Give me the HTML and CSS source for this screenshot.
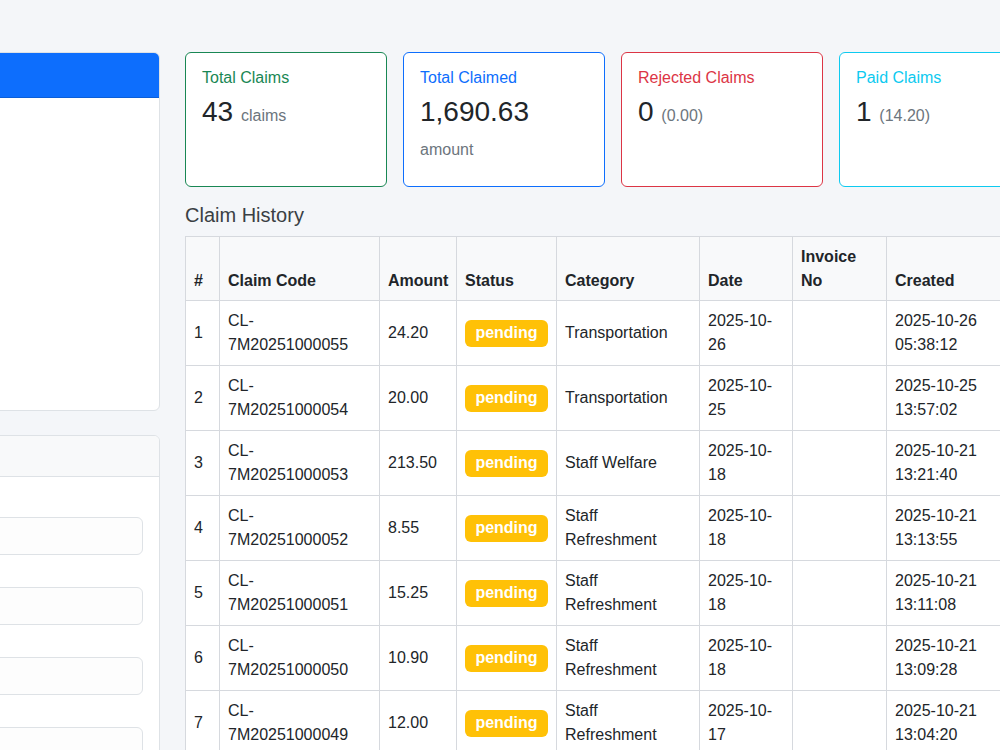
FILE: index.html
```html
<!DOCTYPE html>
<html lang="en">
<head>
    <meta charset="UTF-8">
    <title>My Claims</title>
    <meta name="viewport" content="width=device-width, initial-scale=1.0">
    <link rel="stylesheet" href="styles.css">
</head>
<body>
<div class="page">
    <aside class="side">
        <div class="card">
            <div class="card-header header-blue"></div>
            <div class="card-body profile-body"></div>
        </div>
        <div class="card">
            <div class="card-header"></div>
            <div class="card-body">
                <input type="text" class="field">
                <input type="text" class="field">
                <input type="text" class="field">
                <input type="text" class="field">
                <input type="text" class="field">
            </div>
        </div>
    </aside>
    <main class="content">
        <div class="stats">
            <div class="stat green">
                <h6 class="stat-title">Total Claims</h6>
                <h3 class="stat-value">43 <small>claims</small></h3>
            </div>
            <div class="stat blue">
                <h6 class="stat-title">Total Claimed</h6>
                <h3 class="stat-value">1,690.63 <small>amount</small></h3>
            </div>
            <div class="stat red">
                <h6 class="stat-title">Rejected Claims</h6>
                <h3 class="stat-value">0 <small>(0.00)</small></h3>
            </div>
            <div class="stat cyan">
                <h6 class="stat-title">Paid Claims</h6>
                <h3 class="stat-value">1 <small>(14.20)</small></h3>
            </div>
        </div>
        <h5 class="section-title">Claim History</h5>
        <table class="claims">
            <colgroup>
                <col style="width:34px">
                <col style="width:160px">
                <col style="width:77px">
                <col style="width:100px">
                <col style="width:143px">
                <col style="width:93px">
                <col style="width:94px">
                <col style="width:130px">
            </colgroup>
            <thead>
            <tr>
                <th>#</th>
                <th>Claim Code</th>
                <th>Amount</th>
                <th>Status</th>
                <th>Category</th>
                <th>Date</th>
                <th>Invoice No</th>
                <th>Created</th>
            </tr>
            </thead>
            <tbody>
            <tr>
                <td>1</td>
                <td>CL-7M20251000055</td>
                <td>24.20</td>
                <td><span class="badge">pending</span></td>
                <td>Transportation</td>
                <td>2025-10-26</td>
                <td></td>
                <td>2025-10-26 05:38:12</td>
            </tr>
            <tr>
                <td>2</td>
                <td>CL-7M20251000054</td>
                <td>20.00</td>
                <td><span class="badge">pending</span></td>
                <td>Transportation</td>
                <td>2025-10-25</td>
                <td></td>
                <td>2025-10-25 13:57:02</td>
            </tr>
            <tr>
                <td>3</td>
                <td>CL-7M20251000053</td>
                <td>213.50</td>
                <td><span class="badge">pending</span></td>
                <td>Staff Welfare</td>
                <td>2025-10-18</td>
                <td></td>
                <td>2025-10-21 13:21:40</td>
            </tr>
            <tr>
                <td>4</td>
                <td>CL-7M20251000052</td>
                <td>8.55</td>
                <td><span class="badge">pending</span></td>
                <td>Staff Refreshment</td>
                <td>2025-10-18</td>
                <td></td>
                <td>2025-10-21 13:13:55</td>
            </tr>
            <tr>
                <td>5</td>
                <td>CL-7M20251000051</td>
                <td>15.25</td>
                <td><span class="badge">pending</span></td>
                <td>Staff Refreshment</td>
                <td>2025-10-18</td>
                <td></td>
                <td>2025-10-21 13:11:08</td>
            </tr>
            <tr>
                <td>6</td>
                <td>CL-7M20251000050</td>
                <td>10.90</td>
                <td><span class="badge">pending</span></td>
                <td>Staff Refreshment</td>
                <td>2025-10-18</td>
                <td></td>
                <td>2025-10-21 13:09:28</td>
            </tr>
            <tr>
                <td>7</td>
                <td>CL-7M20251000049</td>
                <td>12.00</td>
                <td><span class="badge">pending</span></td>
                <td>Staff Refreshment</td>
                <td>2025-10-17</td>
                <td></td>
                <td>2025-10-21 13:04:20</td>
            </tr>
            </tbody>
        </table>
    </main>
</div>
</body>
</html>
```

FILE: styles.css
```css
*{margin: 0;padding: 0;box-sizing: border-box;}
html,body{
    overflow: hidden;
    height: 100vh;
}
body{
    background-color: #f4f6f9;
    font-family: "Liberation Sans", Arial, sans-serif;
    font-size: 16px;
    line-height: 1.5;
    color: #212529;
}
.page{
    display: flex;
    gap: 25px;
    padding-top: 52px;
    margin-left: -160px;
}

/* left column */
.side{
    flex: 0 0 320px;
    display: flex;
    flex-direction: column;
    gap: 24px;
}
.card{
    background-color: #fff;
    border: 1px solid #dee2e6;
    border-radius: 6px;
    overflow: hidden;
}
.card-header{
    height: 41px;
    background-color: #f8f9fa;
    border-bottom: 1px solid #dee2e6;
}
.card-header.header-blue{
    height: 46px;
    margin: -1px -1px 0;
    background-color: #0d6efd;
    border-bottom: 1px solid #0b5ed7;
}
.card-body{
    padding: 16px;
}
.profile-body{
    height: 312px;
}
.card-body .field{
    display: block;
    width: 100%;
    height: 38px;
    margin-top: 24px;
    border: 1px solid #dee2e6;
    border-radius: 6px;
    background-color: #fdfdfd;
    outline: none;
}
.card-body .field + .field{
    margin-top: 32px;
}

/* right column */
.content{
    flex: 0 0 900px;
}
.stats{
    display: grid;
    grid-template-columns: repeat(4, 202px);
    gap: 16px;
    margin-bottom: 16px;
}
.stat{
    height: 135px;
    padding: 15px 16px 16px;
    background-color: #fff;
    border: 1px solid;
    border-radius: 6px;
}
.stat-title{
    margin-bottom: 8px;
    font-size: 16px;
    font-weight: normal;
    line-height: 1.2;
}
.stat-value{
    font-size: 28px;
    font-weight: normal;
    line-height: 1.2;
    color: #212529;
}
.stat-value small{
    font-size: 16px;
    color: #6c757d;
}
.green{border-color: #198754;}
.green .stat-title{color: #198754;}
.blue{border-color: #0d6efd;}
.blue .stat-title{color: #0d6efd;}
.red{border-color: #dc3545;}
.red .stat-title{color: #dc3545;}
.cyan{border-color: #0dcaf0;}
.cyan .stat-title{color: #0dcaf0;}

.section-title{
    height: 24px;
    margin-bottom: 9px;
    font-size: 20px;
    font-weight: normal;
    line-height: 1.2;
    color: #3a3f44;
}

.claims{
    table-layout: fixed;
    width: 831px;
    border-collapse: collapse;
    background-color: #fff;
}
.claims th,.claims td{
    padding: 8px;
    border: 1px solid #d6d9de;
    text-align: left;
    line-height: 24px;
}
.claims th{
    padding-bottom: 7px;
    vertical-align: bottom;
    font-weight: bold;
    background-color: #f8f9fa;
}
.claims td{
    vertical-align: middle;
    height: 65px;
}
.badge{
    display: inline-block;
    padding: 5px 10.4px 6px;
    font-size: 16px;
    font-weight: bold;
    line-height: 1;
    color: #fff;
    background-color: #ffc107;
    border-radius: 6px;
}
```
